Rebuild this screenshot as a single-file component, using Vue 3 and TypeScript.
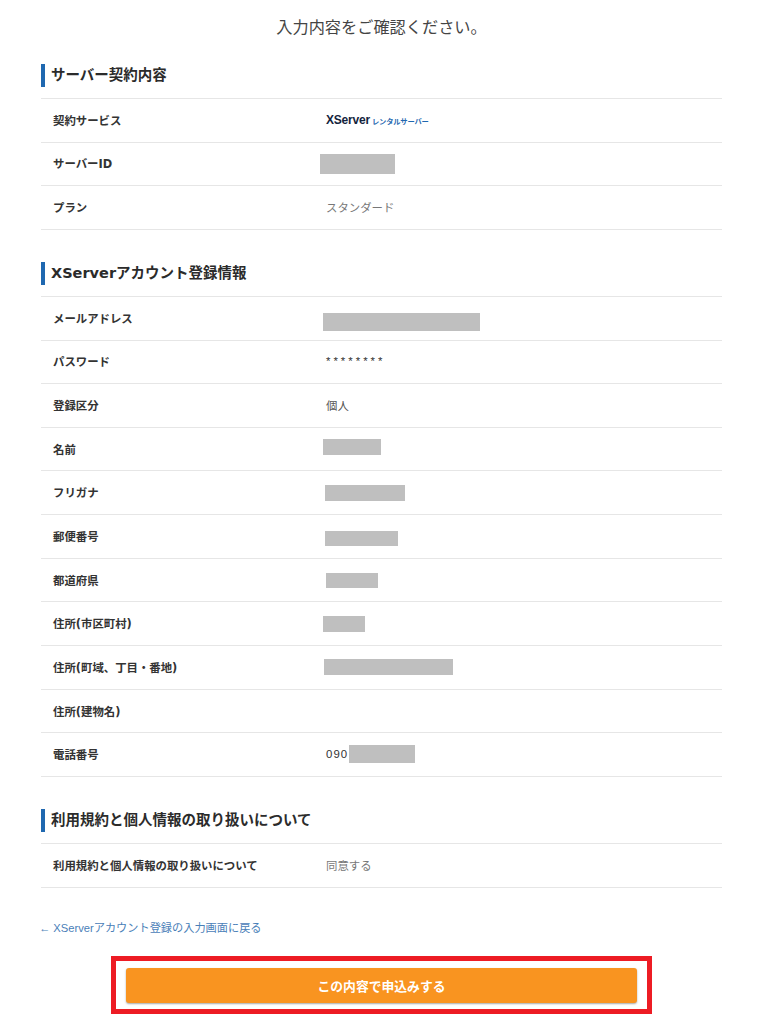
<script setup lang="ts">
interface Mask { left: number; top: number; width: number; height: number }
interface Row { label: string; value?: string; logo?: boolean; mask?: Mask; cls?: string }
interface Section { title: string; rows: Row[] }

const sections: Section[] = [
  {
    title: 'サーバー契約内容',
    rows: [
      { label: '契約サービス', logo: true },
      { label: 'サーバーID', mask: { left: -6, top: 11, width: 75, height: 20 } },
      { label: 'プラン', value: 'スタンダード', cls: 'light' },
    ],
  },
  {
    title: 'XServerアカウント登録情報',
    rows: [
      { label: 'メールアドレス', mask: { left: -3, top: 16, width: 157, height: 18 } },
      { label: 'パスワード', value: '********', cls: 'stars' },
      { label: '登録区分', value: '個人' },
      { label: '名前', mask: { left: -3, top: 11, width: 58, height: 16 } },
      { label: 'フリガナ', mask: { left: -1, top: 14, width: 80, height: 16 } },
      { label: '郵便番号', mask: { left: -1, top: 16, width: 73, height: 15 } },
      { label: '都道府県', mask: { left: 0, top: 14, width: 52, height: 15 } },
      { label: '住所(市区町村)', mask: { left: -3, top: 14, width: 42, height: 16 } },
      { label: '住所(町域、丁目・番地)', mask: { left: -2, top: 13, width: 129, height: 16 } },
      { label: '住所(建物名)' },
      { label: '電話番号', value: '090', cls: 'phone', mask: { left: 23, top: 12, width: 66, height: 18 } },
    ],
  },
  {
    title: '利用規約と個人情報の取り扱いについて',
    rows: [{ label: '利用規約と個人情報の取り扱いについて', value: '同意する', cls: 'light' }],
  },
]

function maskStyle(m: Mask) {
  return { left: `${m.left}px`, top: `${m.top}px`, width: `${m.width}px`, height: `${m.height}px` }
}
</script>

<template>
  <main class="page">
    <p class="lead">入力内容をご確認ください。</p>

    <section v-for="s in sections" :key="s.title" class="section">
      <h2 class="title">{{ s.title }}</h2>
      <dl class="table">
        <div v-for="r in s.rows" :key="r.label" class="row">
          <dt class="label">{{ r.label }}</dt>
          <dd class="value" :class="r.cls">
            <span v-if="r.logo" class="logo"><b class="logo-main">XServer</b><span class="logo-sub">レンタルサーバー</span></span>
            <template v-else>{{ r.value }}</template>
            <span v-if="r.mask" class="mask" :style="maskStyle(r.mask)"></span>
          </dd>
        </div>
      </dl>
    </section>

    <a class="back" href="#">← XServerアカウント登録の入力画面に戻る</a>

    <div class="frame">
      <button class="submit" type="button">この内容で申込みする</button>
    </div>
  </main>
</template>

<style>
html, body { margin: 0; background: #fff; }
</style>

<style scoped>
.page {
  box-sizing: border-box;
  width: 768px;
  height: 1024px;
  overflow: hidden;
  padding: 16px 46px 0 41px;
  font-family: "Noto Sans CJK JP", "Liberation Sans", sans-serif;
  color: #333;
}
.lead {
  margin: 0 0 27px;
  height: 21px;
  line-height: 21px;
  text-align: center;
  font-size: 16.2px;
  color: #444;
}
.section { margin-bottom: 32px; }
.title {
  margin: 0 0 11px;
  height: 23px;
  line-height: 22px;
  padding-left: 6px;
  border-left: 4px solid #1f68b0;
  font-family: "DejaVu Sans", "Noto Sans CJK JP", sans-serif;
  font-size: 14.5px;
  font-weight: 700;
  color: #2b2b2b;
}
.table { margin: 0; border-top: 1px solid #e6e6e6; }
.row {
  box-sizing: border-box;
  display: flex;
  align-items: center;
  height: 43.65px;
  border-bottom: 1px solid #e6e6e6;
}
.label {
  box-sizing: border-box;
  width: 285px;
  padding-left: 12px;
  padding-bottom: 1px;
  font-family: "DejaVu Sans", "Noto Sans CJK JP", sans-serif;
  font-size: 11.4px;
  font-weight: 700;
  color: #333;
}
.value {
  position: relative;
  align-self: stretch;
  display: flex;
  align-items: center;
  margin: 0;
  padding-bottom: 1px;
  flex: 1;
  font-size: 11.4px;
  color: #555;
}
.light { color: #777; }
.stars { color: #333; letter-spacing: 3px; font-family: "Liberation Sans", sans-serif; }
.phone { color: #333; letter-spacing: 1.1px; font-family: "Liberation Sans", sans-serif; }
.mask { position: absolute; background: #bfbfbf; }
.logo { display: inline-flex; align-items: baseline; gap: 2px; }
.logo-main {
  font-family: "Liberation Sans", sans-serif;
  font-size: 12px;
  letter-spacing: -0.2px;
  color: #14233c;
}
.logo-sub {
  font-size: 7.3px;
  font-weight: 700;
  letter-spacing: -0.2px;
  color: #1f68b0;
}
.back {
  display: block;
  margin: 32px 0 0 -2px;
  font-family: "Liberation Sans", "Noto Sans CJK JP", sans-serif;
  font-size: 11.2px;
  line-height: 16px;
  color: #4a80b8;
  text-decoration: none;
}
.frame {
  box-sizing: border-box;
  width: 541px;
  height: 58px;
  margin: 20px 0 0 70px;
  padding: 7px 10px 0;
  border: 5px solid #ed1c24;
}
.submit {
  display: block;
  width: 511px;
  height: 35px;
  padding: 0;
  border: 0;
  border-radius: 3px;
  background: #f99420;
  box-shadow: 0 1px 2px rgba(0, 0, 0, 0.35);
  color: #fff;
  font-family: inherit;
  font-size: 12.8px;
  font-weight: 700;
}
</style>
